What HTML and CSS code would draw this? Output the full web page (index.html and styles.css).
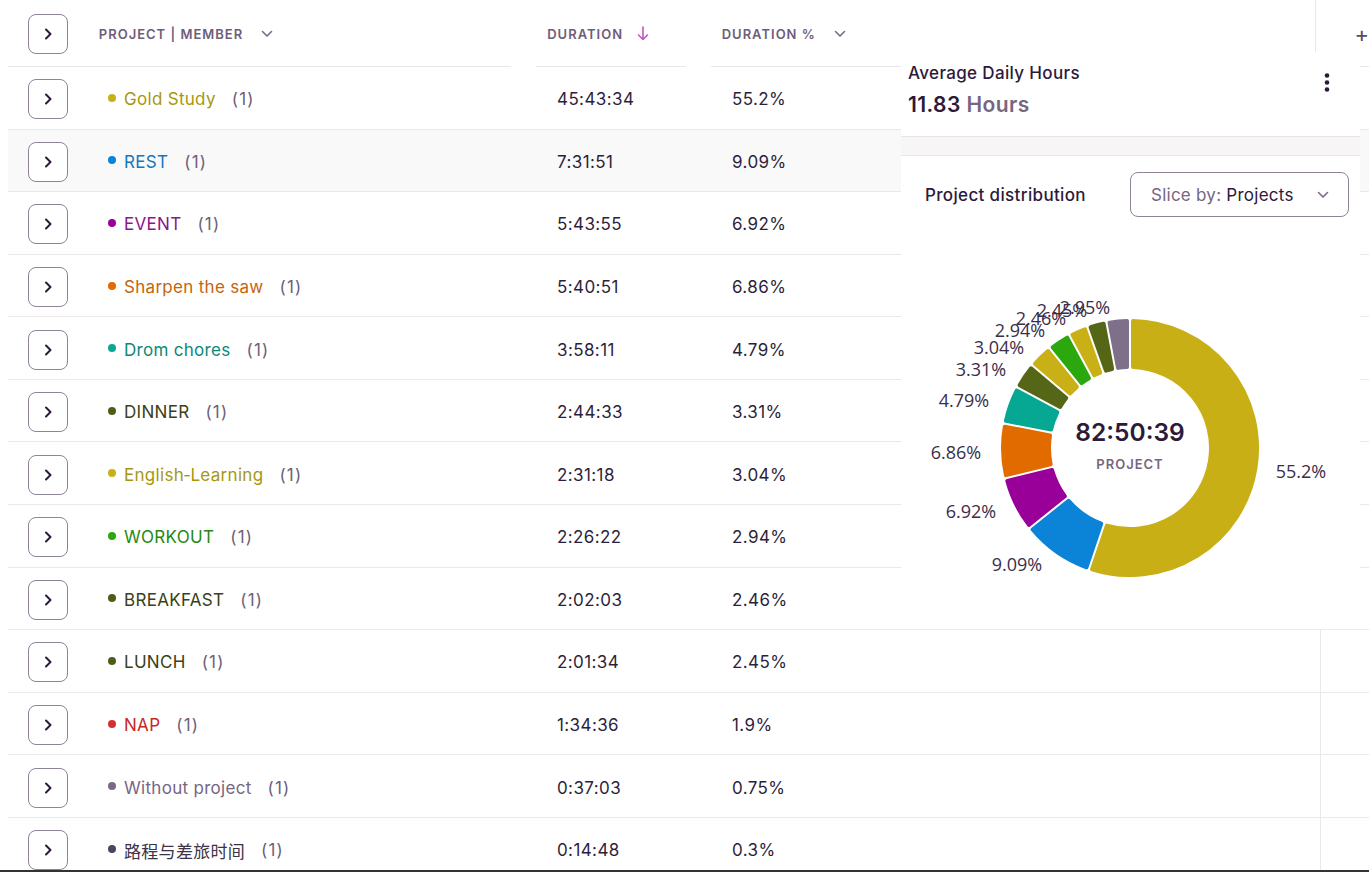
FILE: index.html
```html
<!DOCTYPE html>
<html lang="en">
<head>
<meta charset="utf-8">
<title>Report</title>
<link rel="stylesheet" href="styles.css">
</head>
<body>
<div class="page">
  <div class="table">
    <div class="thead">
      <div class="th th-expand">
        <span class="expand"><svg width="8" height="12" viewBox="0 0 8 12"><path d="M2 1.5 L6.5 6 L2 10.5" fill="none" stroke="#2d1a3a" stroke-width="2" stroke-linecap="round" stroke-linejoin="round"/></svg></span>
      </div>
      <div class="th th-project"><span>PROJECT | MEMBER</span><svg class="hchev" width="12" height="8" viewBox="0 0 12 8"><path d="M1.5 1.5 L6 6 L10.5 1.5" fill="none" stroke="#7a6a85" stroke-width="1.6" stroke-linecap="round" stroke-linejoin="round"/></svg></div>
      <div class="th th-duration"><span>DURATION</span><svg class="sort" width="12" height="15" viewBox="0 0 12 15"><path d="M6 1 V13.5 M1.5 9 L6 13.5 L10.5 9" fill="none" stroke="#c455c4" stroke-width="1.6" stroke-linecap="round" stroke-linejoin="round"/></svg></div>
      <div class="th th-pct"><span>DURATION %</span><svg class="hchev" width="12" height="8" viewBox="0 0 12 8"><path d="M1.5 1.5 L6 6 L10.5 1.5" fill="none" stroke="#7a6a85" stroke-width="1.6" stroke-linecap="round" stroke-linejoin="round"/></svg></div>
      <div class="th th-add"><span class="plus">+</span></div>
    </div>

    <div class="tr">
      <div class="td td-expand"><span class="expand"><svg width="8" height="12" viewBox="0 0 8 12"><path d="M2 1.5 L6.5 6 L2 10.5" fill="none" stroke="#2d1a3a" stroke-width="2" stroke-linecap="round" stroke-linejoin="round"/></svg></span></div>
      <div class="td td-project"><i class="dot c-gold"></i><span class="name t-gold">Gold Study</span><span class="count">(1)</span></div>
      <div class="td td-duration">45:43:34</div>
      <div class="td td-pct">55.2%</div>
      <div class="td td-add"></div>
    </div>
    <div class="tr hover">
      <div class="td td-expand"><span class="expand"><svg width="8" height="12" viewBox="0 0 8 12"><path d="M2 1.5 L6.5 6 L2 10.5" fill="none" stroke="#2d1a3a" stroke-width="2" stroke-linecap="round" stroke-linejoin="round"/></svg></span></div>
      <div class="td td-project"><i class="dot c-blue"></i><span class="name t-blue">REST</span><span class="count">(1)</span></div>
      <div class="td td-duration">7:31:51</div>
      <div class="td td-pct">9.09%</div>
      <div class="td td-add"></div>
    </div>
    <div class="tr">
      <div class="td td-expand"><span class="expand"><svg width="8" height="12" viewBox="0 0 8 12"><path d="M2 1.5 L6.5 6 L2 10.5" fill="none" stroke="#2d1a3a" stroke-width="2" stroke-linecap="round" stroke-linejoin="round"/></svg></span></div>
      <div class="td td-project"><i class="dot c-purple"></i><span class="name t-purple">EVENT</span><span class="count">(1)</span></div>
      <div class="td td-duration">5:43:55</div>
      <div class="td td-pct">6.92%</div>
      <div class="td td-add"></div>
    </div>
    <div class="tr">
      <div class="td td-expand"><span class="expand"><svg width="8" height="12" viewBox="0 0 8 12"><path d="M2 1.5 L6.5 6 L2 10.5" fill="none" stroke="#2d1a3a" stroke-width="2" stroke-linecap="round" stroke-linejoin="round"/></svg></span></div>
      <div class="td td-project"><i class="dot c-orange"></i><span class="name t-orange">Sharpen the saw</span><span class="count">(1)</span></div>
      <div class="td td-duration">5:40:51</div>
      <div class="td td-pct">6.86%</div>
      <div class="td td-add"></div>
    </div>
    <div class="tr">
      <div class="td td-expand"><span class="expand"><svg width="8" height="12" viewBox="0 0 8 12"><path d="M2 1.5 L6.5 6 L2 10.5" fill="none" stroke="#2d1a3a" stroke-width="2" stroke-linecap="round" stroke-linejoin="round"/></svg></span></div>
      <div class="td td-project"><i class="dot c-teal"></i><span class="name t-teal">Drom chores</span><span class="count">(1)</span></div>
      <div class="td td-duration">3:58:11</div>
      <div class="td td-pct">4.79%</div>
      <div class="td td-add"></div>
    </div>
    <div class="tr">
      <div class="td td-expand"><span class="expand"><svg width="8" height="12" viewBox="0 0 8 12"><path d="M2 1.5 L6.5 6 L2 10.5" fill="none" stroke="#2d1a3a" stroke-width="2" stroke-linecap="round" stroke-linejoin="round"/></svg></span></div>
      <div class="td td-project"><i class="dot c-olive"></i><span class="name t-olive">DINNER</span><span class="count">(1)</span></div>
      <div class="td td-duration">2:44:33</div>
      <div class="td td-pct">3.31%</div>
      <div class="td td-add"></div>
    </div>
    <div class="tr">
      <div class="td td-expand"><span class="expand"><svg width="8" height="12" viewBox="0 0 8 12"><path d="M2 1.5 L6.5 6 L2 10.5" fill="none" stroke="#2d1a3a" stroke-width="2" stroke-linecap="round" stroke-linejoin="round"/></svg></span></div>
      <div class="td td-project"><i class="dot c-gold"></i><span class="name t-gold">English‑Learning</span><span class="count">(1)</span></div>
      <div class="td td-duration">2:31:18</div>
      <div class="td td-pct">3.04%</div>
      <div class="td td-add"></div>
    </div>
    <div class="tr">
      <div class="td td-expand"><span class="expand"><svg width="8" height="12" viewBox="0 0 8 12"><path d="M2 1.5 L6.5 6 L2 10.5" fill="none" stroke="#2d1a3a" stroke-width="2" stroke-linecap="round" stroke-linejoin="round"/></svg></span></div>
      <div class="td td-project"><i class="dot c-green"></i><span class="name t-green">WORKOUT</span><span class="count">(1)</span></div>
      <div class="td td-duration">2:26:22</div>
      <div class="td td-pct">2.94%</div>
      <div class="td td-add"></div>
    </div>
    <div class="tr">
      <div class="td td-expand"><span class="expand"><svg width="8" height="12" viewBox="0 0 8 12"><path d="M2 1.5 L6.5 6 L2 10.5" fill="none" stroke="#2d1a3a" stroke-width="2" stroke-linecap="round" stroke-linejoin="round"/></svg></span></div>
      <div class="td td-project"><i class="dot c-olive"></i><span class="name t-olive">BREAKFAST</span><span class="count">(1)</span></div>
      <div class="td td-duration">2:02:03</div>
      <div class="td td-pct">2.46%</div>
      <div class="td td-add"></div>
    </div>
    <div class="tr">
      <div class="td td-expand"><span class="expand"><svg width="8" height="12" viewBox="0 0 8 12"><path d="M2 1.5 L6.5 6 L2 10.5" fill="none" stroke="#2d1a3a" stroke-width="2" stroke-linecap="round" stroke-linejoin="round"/></svg></span></div>
      <div class="td td-project"><i class="dot c-olive"></i><span class="name t-olive">LUNCH</span><span class="count">(1)</span></div>
      <div class="td td-duration">2:01:34</div>
      <div class="td td-pct">2.45%</div>
      <div class="td td-add"></div>
    </div>
    <div class="tr">
      <div class="td td-expand"><span class="expand"><svg width="8" height="12" viewBox="0 0 8 12"><path d="M2 1.5 L6.5 6 L2 10.5" fill="none" stroke="#2d1a3a" stroke-width="2" stroke-linecap="round" stroke-linejoin="round"/></svg></span></div>
      <div class="td td-project"><i class="dot c-red"></i><span class="name t-red">NAP</span><span class="count">(1)</span></div>
      <div class="td td-duration">1:34:36</div>
      <div class="td td-pct">1.9%</div>
      <div class="td td-add"></div>
    </div>
    <div class="tr">
      <div class="td td-expand"><span class="expand"><svg width="8" height="12" viewBox="0 0 8 12"><path d="M2 1.5 L6.5 6 L2 10.5" fill="none" stroke="#2d1a3a" stroke-width="2" stroke-linecap="round" stroke-linejoin="round"/></svg></span></div>
      <div class="td td-project"><i class="dot c-gray"></i><span class="name t-gray">Without project</span><span class="count">(1)</span></div>
      <div class="td td-duration">0:37:03</div>
      <div class="td td-pct">0.75%</div>
      <div class="td td-add"></div>
    </div>
    <div class="tr">
      <div class="td td-expand"><span class="expand"><svg width="8" height="12" viewBox="0 0 8 12"><path d="M2 1.5 L6.5 6 L2 10.5" fill="none" stroke="#2d1a3a" stroke-width="2" stroke-linecap="round" stroke-linejoin="round"/></svg></span></div>
      <div class="td td-project"><i class="dot c-slate"></i><span class="name t-slate">路程与差旅时间</span><span class="count">(1)</span></div>
      <div class="td td-duration">0:14:48</div>
      <div class="td td-pct">0.3%</div>
      <div class="td td-add"></div>
    </div>
  </div>

  <aside class="panel">
    <section class="stat">
      <div class="stat-text">
        <div class="stat-title">Average Daily Hours</div>
        <div class="stat-value">11.83 <span class="unit">Hours</span></div>
      </div>
      <svg class="kebab" width="6" height="19" viewBox="0 0 6 19"><circle cx="3" cy="2.5" r="2.3" fill="#2d1a3a"/><circle cx="3" cy="9.5" r="2.3" fill="#2d1a3a"/><circle cx="3" cy="16.5" r="2.3" fill="#2d1a3a"/></svg>
    </section>
    <div class="band"></div>
    <section class="dist">
      <div class="dist-head">
        <div class="dist-title">Project distribution</div>
        <div class="dropdown"><span><span class="dd-label">Slice by:</span> Projects</span><svg width="12" height="8" viewBox="0 0 12 8"><path d="M1.5 1.5 L6 6 L10.5 1.5" fill="none" stroke="#7a6a85" stroke-width="1.6" stroke-linecap="round" stroke-linejoin="round"/></svg></div>
      </div>
      <svg class="donut" width="459" height="360" viewBox="0 0 459 360">
        <g id="segs"></g>
        <g class="labels">
          <text x="400" y="254">55.2%</text>
          <text x="116" y="347">9.09%</text>
          <text x="70" y="294">6.92%</text>
          <text x="55" y="235">6.86%</text>
          <text x="63" y="183">4.79%</text>
          <text x="80" y="152">3.31%</text>
          <text x="98" y="130">3.04%</text>
          <text x="119" y="113">2.94%</text>
          <text x="140" y="101">2.46%</text>
          <text x="161" y="93">2.45%</text>
          <text x="184" y="90">2.95%</text>
        </g>
        <text class="center-value" x="229" y="215">82:50:39</text>
        <text class="center-label" x="229" y="247">PROJECT</text>
      </svg>
    </section>
  </aside>
</div>
<div class="taskbar"></div>
<script src="script.js"></script>
</body>
</html>
```

FILE: styles.css
```css
* { box-sizing: border-box; margin: 0; padding: 0; }
html, body { height: 100%; overflow: hidden; background: #fff; }
body {
  font-family: Inter, "Noto Sans CJK SC", sans-serif;
  color: #2d1f3b;
}
.page { position: relative; padding-left: 8px; height: 872px; overflow: hidden; }

.thead { display: flex; height: 67px; }
.th {
  display: flex; align-items: center; height: 67px; padding-top: 1px;
  border-bottom: 1px solid #ebe6ea;
  font-size: 13px; font-weight: 600; letter-spacing: 1px; color: #6e5d7a;
}
.th-expand { width: 80px; padding-left: 20px; }
.th-project { width: 425px; margin-right: 25px; padding-left: 11px; }
.th-duration { width: 150px; margin-right: 25px; padding-left: 11px; }
.th-pct { width: 607px; padding-left: 11px; }
.th-add { flex: 1; border-left: 1px solid #ebe6ea; padding-left: 38px; }
.plus { font-size: 22px; font-weight: 400; color: #5b4a68; letter-spacing: 0; }
.hchev { margin-left: 18px; }
.sort { margin-left: 14px; }

.tr { display: flex; height: 62.58px; padding-top: 3px; border-bottom: 1px solid #ebe8eb; }
.tr.hover { background: #f9f9f9; }
.td { display: flex; align-items: center; font-size: 17px; }
.td-expand { width: 80px; padding-left: 20px; }
.td-project { width: 450px; padding-left: 20px; }
.td-duration { width: 175px; padding-left: 19px; letter-spacing: 0.4px; }
.td-pct { width: 607px; padding-left: 19px; letter-spacing: 0.4px; }
.td-add { flex: 1; border-left: 1px solid #ebe8eb; margin-top: -3px; }

.expand {
  width: 40px; height: 40px; border: 1px solid #8f8398; border-radius: 8px;
  background: #fff; display: flex; align-items: center; justify-content: center;
}
.dot { width: 8px; height: 8px; border-radius: 50%; margin-right: 8px; display: inline-block; margin-top: -3px; }
.name { letter-spacing: 0.3px; }
.count { margin-left: 16px; color: #6e5f79; letter-spacing: 1.2px; }

.c-gold { background: #c8b016; } .t-gold { color: #a6970f; }
.c-blue { background: #0b84d8; } .t-blue { color: #1576be; }
.c-purple { background: #990099; } .t-purple { color: #8a168a; }
.c-orange { background: #e26b00; } .t-orange { color: #c6640e; }
.c-teal { background: #0aa893; } .t-teal { color: #0e8876; }
.c-olive { background: #4f5c1a; } .t-olive { color: #3a4115; }
.c-green { background: #2aa80e; } .t-green { color: #1f8a10; }
.c-red { background: #d62f2f; } .t-red { color: #c62828; }
.c-gray { background: #7a6a85; } .t-gray { color: #76667f; }
.c-slate { background: #4a4560; } .t-slate { color: #3b3347; }

.panel {
  position: absolute; left: 901px; top: 52px; width: 459px; height: 577px;
  background: #fff;
}
.stat { height: 84px; padding: 10px 30px 0 7px; display: flex; justify-content: space-between; align-items: flex-start; }
.stat-title { font-size: 17px; font-weight: 500; line-height: 22px; color: #2d1a3a; letter-spacing: 0.35px; }
.stat-value { font-size: 21px; font-weight: 600; line-height: 26px; margin-top: 8px; color: #2d1a3a; letter-spacing: 0.4px; }
.stat-value .unit { color: #76667f; }
.kebab { margin-top: 11px; }
.band { height: 20px; background: #f7f5f5; border-top: 1px solid #e9e4e8; border-bottom: 1px solid #e9e4e8; }
.dist-head { display: flex; justify-content: space-between; align-items: center; padding: 16px 11px 0 24px; }
.dist-title { font-size: 17px; font-weight: 500; color: #2d1a3a; letter-spacing: 0.35px; }
.dropdown {
  width: 219px; height: 45px; border: 1px solid #8f8398; border-radius: 8px;
  display: flex; align-items: center; justify-content: space-between;
  padding: 0 19px 0 20px; font-size: 17px; color: #2d1a3a; letter-spacing: 0.25px;
}
.dd-label { color: #76667f; }
.donut { display: block; }
.labels text {
  font-family: "Open Sans", sans-serif; font-size: 18px; fill: #3b2e4a;
  text-anchor: middle; dominant-baseline: central;
}
.center-value {
  font-family: Inter, sans-serif; font-size: 24.5px; font-weight: 600; fill: #2d1a3a;
  text-anchor: middle; dominant-baseline: central;
}
.center-label {
  font-family: Inter, sans-serif; font-size: 13px; font-weight: 600; fill: #76667f;
  letter-spacing: 1px; text-anchor: middle; dominant-baseline: central;
}
.taskbar { position: fixed; left: 0; right: 0; bottom: 0; height: 2px; background: #333; }
```

FILE: script.js
```js
(function () {
  var g = document.getElementById('segs');
  var data = [
    [55.2, '#c8af16'], [9.09, '#0b84d8'], [6.92, '#990099'], [6.86, '#e26b00'],
    [4.79, '#06a793'], [3.31, '#566617'], [3.04, '#c8b016'], [2.94, '#2aa80e'],
    [2.46, '#c8b016'], [2.45, '#566617'], [2.95, '#7e7088']
  ];
  var total = 0;
  data.forEach(function (s) { total += s[0]; });
  var cx = 229, cy = 231, R = 130, r = 78, d = 3, sw = 4;
  var Ro = R - d, Ri = r + d;
  function pt(a, rad) { return (cx + rad * Math.sin(a)).toFixed(2) + ' ' + (cy - rad * Math.cos(a)).toFixed(2); }
  var a0 = 0;
  data.forEach(function (s) {
    var a1 = a0 + s[0] / total * 2 * Math.PI;
    var po = Math.asin(d / Ro), pi = Math.asin(d / Ri);
    var lo = (a1 - a0 - 2 * po) > Math.PI ? 1 : 0;
    var li = (a1 - a0 - 2 * pi) > Math.PI ? 1 : 0;
    var path = 'M' + pt(a0 + po, Ro) + ' A' + Ro + ' ' + Ro + ' 0 ' + lo + ' 1 ' + pt(a1 - po, Ro) +
      ' L' + pt(a1 - pi, Ri) + ' A' + Ri + ' ' + Ri + ' 0 ' + li + ' 0 ' + pt(a0 + pi, Ri) + ' Z';
    var el = document.createElementNS('http://www.w3.org/2000/svg', 'path');
    el.setAttribute('d', path);
    el.setAttribute('fill', s[1]);
    el.setAttribute('stroke', s[1]);
    el.setAttribute('stroke-width', sw);
    el.setAttribute('stroke-linejoin', 'round');
    g.appendChild(el);
    a0 = a1;
  });
})();
```
